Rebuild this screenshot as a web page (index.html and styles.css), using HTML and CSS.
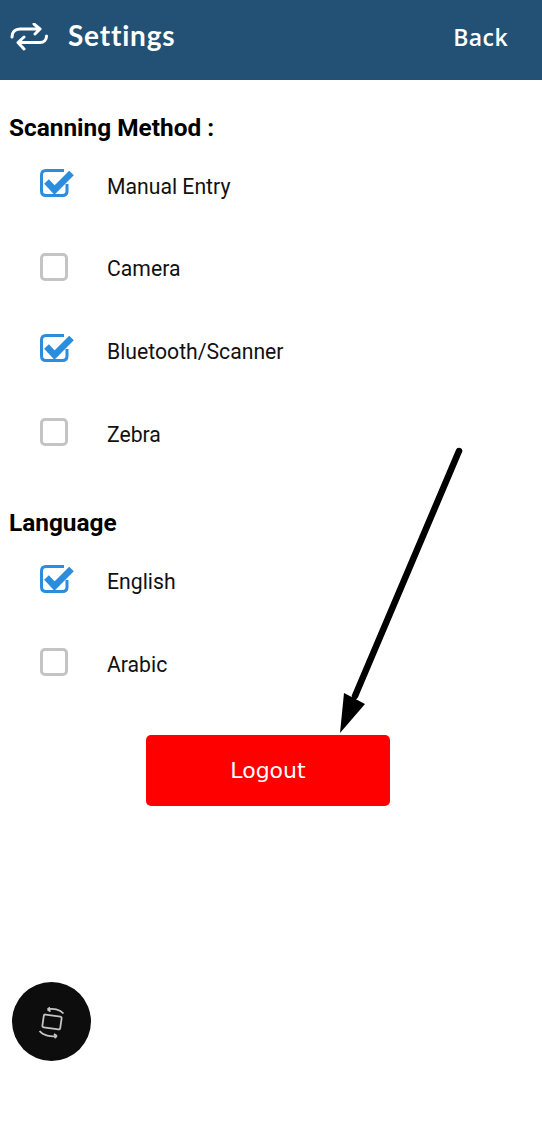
FILE: index.html
```html
<!DOCTYPE html>
<html lang="en">
<head>
    <meta charset="UTF-8">
    <meta name="viewport" content="width=device-width, initial-scale=1.0">
    <title>Settings</title>
    <link rel="stylesheet" href="styles.css">
</head>
<body>
    <div class="header">
        <svg class="header-icon" width="38" height="28" viewBox="0 0 38 28">
            <path d="M2 14 C2 9 5 6 10 6 H30 M24 1 L30 6 L25 11" />
            <path d="M36.500 13 C36.500 17 34 19.500 30 19.500 H8 M14 14 L8 19.500 L14 26" />
        </svg>
        <div class="header-title">Settings</div>
        <div class="header-back">Back</div>
    </div>

    <div class="section">
        <h4 class="section-title">Scanning Method :</h4>
        <div class="option">
            <svg class="check" viewBox="0 0 36 32"><use href="#box-on"></use></svg>
            <span>Manual Entry</span>
        </div>
        <div class="option">
            <span class="box"></span>
            <span>Camera</span>
        </div>
        <div class="option">
            <svg class="check" viewBox="0 0 36 32"><use href="#box-on"></use></svg>
            <span>Bluetooth/Scanner</span>
        </div>
        <div class="option">
            <span class="box"></span>
            <span>Zebra</span>
        </div>
    </div>

    <div class="section section-language">
        <h4 class="section-title">Language</h4>
        <div class="option">
            <svg class="check" viewBox="0 0 36 32"><use href="#box-on"></use></svg>
            <span>English</span>
        </div>
        <div class="option">
            <span class="box"></span>
            <span>Arabic</span>
        </div>
    </div>

    <div class="logout-wrap">
        <div class="logout">Logout</div>
    </div>

    <!-- annotation arrow drawn over the page -->
    <svg class="arrow" width="140" height="300" viewBox="0 0 140 300">
        <path class="arrow-line" d="M128 5 L24 250" />
        <path d="M9 287 L13 247 L34 258 Z" />
    </svg>

    <div class="float-btn">
        <svg width="32" height="34" viewBox="0 0 32 34">
            <rect x="7" y="10.500" width="18" height="13" rx="1.500" transform="rotate(8 16 17)" />
            <path d="M11.500 4.500 C17 3 24 4.500 27.500 8.500 M11.500 4.500 L14 2.500 M11.500 4.500 L14.500 6.500" />
            <path d="M3.500 26 C7 30.500 15 32 21 31 M21 31 L18 29 M21 31 L18.500 33" />
        </svg>
    </div>

    <svg class="defs" width="0" height="0">
        <symbol id="box-on" viewBox="0 0 36 32">
            <path class="box-line" d="M27 16 V23 Q27 27.500 22.500 27.500 H6 Q1.500 27.500 1.500 23 V7 Q1.500 2.500 6 2.500 H24" />
            <path class="box-tick" d="M6.500 13.500 L14.500 22 L31.500 5" />
        </symbol>
    </svg>
</body>
</html>
```

FILE: styles.css
```css
*{
    margin: 0;
    padding: 0;
    box-sizing: border-box;
}
body{
    position: relative;
    height: 1144px;
    overflow: hidden;
    background: #fff;
    font-family: Roboto, sans-serif;
    color: #111;
}
.header{
    display: flex;
    align-items: center;
    height: 80px;
    padding: 0 34px 6px 10px;
    background: #235176;
    color: #fff;
}
.header-icon{
    fill: none;
    stroke: #fff;
    stroke-width: 3;
    stroke-linecap: round;
    stroke-linejoin: round;
}
.header-title{
    margin-left: 20px;
    margin-bottom: 4px;
    font-family: Lato, sans-serif;
    font-size: 28px;
    font-weight: 700;
    letter-spacing: 0.8px;
}
.header-back{
    margin-left: auto;
    font-family: "Open Sans", sans-serif;
    font-size: 23px;
    font-weight: 600;
    letter-spacing: 0.4px;
}
.section{
    padding: 33px 0 0 9px;
}
.section-language{
    padding-top: 33px;
}
.section-title{
    height: 29px;
    font-size: 24.400px;
    line-height: 29px;
    font-weight: 700;
    color: #000;
}
.option{
    display: flex;
    align-items: center;
    height: 82.600px;
    padding-left: 31px;
    font-size: 21.200px;
}
.section .section-title + .option{
    margin-top: 3px;
}
.option span:last-child{
    margin-left: 39px;
}
.check{
    width: 36px;
    height: 32px;
    margin-right: -8px;
    margin-bottom: 4px;
}
.box{
    width: 28px;
    height: 28px;
    margin-bottom: 4px;
    border: 3px solid #c4c4c4;
    border-radius: 5px;
}
.box-line{
    fill: none;
    stroke: #2b8ddc;
    stroke-width: 3;
}
.box-tick{
    fill: none;
    stroke: #2b8ddc;
    stroke-width: 6.500;
}
.logout-wrap{
    padding: 29px 0 0 146px;
}
.logout{
    width: 244px;
    height: 71px;
    border-radius: 5px;
    background: #ff0000;
    color: #fff;
    font-family: "DejaVu Sans", sans-serif;
    font-size: 22px;
    line-height: 72px;
    text-align: center;
}
.arrow{
    position: absolute;
    left: 331px;
    top: 446px;
}
.arrow-line{
    fill: none;
    stroke: #000;
    stroke-width: 6.500;
    stroke-linecap: round;
}
.float-btn{
    position: absolute;
    left: 12px;
    top: 982px;
    display: flex;
    align-items: center;
    justify-content: center;
    width: 79px;
    height: 79px;
    border-radius: 50%;
    background: #0d0d0d;
}
.float-btn svg{
    fill: none;
    stroke: #c4c4c4;
    stroke-width: 1.800;
}
.defs{
    position: absolute;
}
```
